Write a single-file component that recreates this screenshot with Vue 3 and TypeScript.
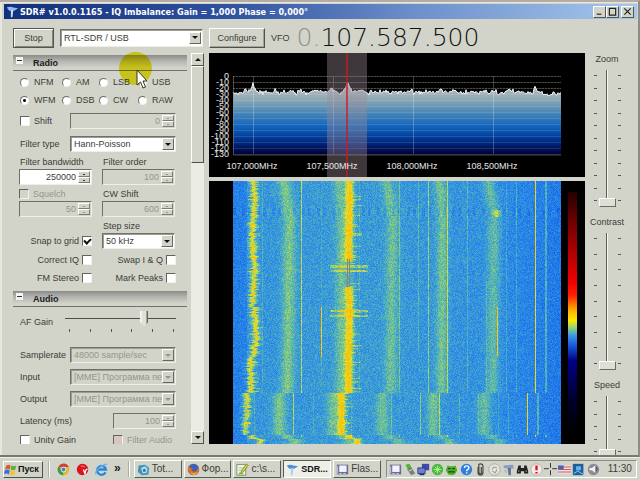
<script setup lang="ts">
import { onMounted, ref } from 'vue'

interface Shape { d: string; fill?: string; stroke?: string; w?: number }

function makeRandom(seed: number) {
  let s = seed
  return () => {
    s = (s * 1664525 + 1013904223) >>> 0
    return s / 4294967296
  }
}

const mode = ref('WFM')
const modes = ['NFM', 'AM', 'LSB', 'USB', 'WFM', 'DSB', 'CW', 'RAW']
const device = ref('RTL-SDR / USB')
const shift = ref(false)
const squelch = ref(false)
const snap = ref(true)
const correctIq = ref(false)
const swapIq = ref(false)
const fmStereo = ref(false)
const markPeaks = ref(false)
const unityGain = ref(false)
const filterAudio = ref(false)
const afGain = ref(73)
const sliders = ref([
  { name: 'Zoom', value: 0, ticks: 11 },
  { name: 'Contrast', value: 0, ticks: 9 },
  { name: 'Speed', value: 0, ticks: 5 },
])

/* Spectrum trace */
const rnd = makeRandom(77)
const trace: string[] = []
let drift = 0
for (let x = 24; x <= 352; x++) {
  drift = drift * 0.6 + (rnd() - 0.5) * 3.4
  let y = 38.6 + drift + (rnd() - 0.5) * 2.8
  y -= 9 * Math.exp(-Math.abs(x - 44) / 1.8)
  y -= 11 * Math.exp(-Math.abs(x - 138.5) / 2.4)
  y -= 5 * Math.exp(-Math.abs(x - 326) / 0.9)
  if (x < 30) y += 2
  if (x > 334) y += 1.6
  trace.push(`${x},${y.toFixed(1)}`)
}
const line = trace.join(' ')
const area = `24,101 ${line} 352,101`
const levels = Array.from({ length: 14 }, (_, i) => ({ y: 23 + i * 6, text: String(-10 * i) }))
const freqs = [
  { x: 44, text: '107,000MHz' },
  { x: 124, text: '107,500MHz' },
  { x: 204, text: '108,000MHz' },
  { x: 284, text: '108,500MHz' },
]

/* Waterfall */
const fall = ref<HTMLCanvasElement | null>(null)
const stops: [number, number[]][] = [
  [0, [16, 78, 205]],
  [0.25, [30, 118, 236]],
  [0.45, [56, 154, 220]],
  [0.6, [92, 184, 172]],
  [0.76, [150, 208, 112]],
  [0.92, [232, 224, 44]],
  [1.1, [255, 190, 0]],
]
function colour(v: number) {
  const t = Math.max(0, Math.min(1.1, v))
  for (let i = 1; i < stops.length; i++) {
    const [b, cb] = stops[i]
    const [a, ca] = stops[i - 1]
    if (t <= b) return ca.map((c, k) => c + ((cb[k] - c) * (t - a)) / (b - a))
  }
  return stops[stops.length - 1][1]
}
interface Carrier { x: number; gain: number; from?: number; to?: number }
const carriers: Carrier[] = [
  { x: 29, gain: 0.12 }, { x: 68, gain: 0.38 }, { x: 88, gain: 0.08 }, { x: 88, gain: 0.54, from: 126, to: 175 },
  { x: 126, gain: 0.1 }, { x: 166, gain: 0.2 }, { x: 185, gain: 0.16, from: 0, to: 172 }, { x: 195, gain: 0.3 },
  { x: 214, gain: 0.34 }, { x: 234, gain: 0.16 }, { x: 253, gain: 0.12, from: 100 },
  { x: 264, gain: 0.54, from: 126, to: 174 }, { x: 273, gain: 0.12 }, { x: 283, gain: 0.16 },
  { x: 302, gain: 0.66 }, { x: 312, gain: 0.26 }, { x: 313, gain: 0.26 },
]
onMounted(() => {
  const ctx = fall.value?.getContext('2d')
  if (!ctx) return
  const w = 328
  const h = 263
  const img = ctx.createImageData(w, h)
  const r = makeRandom(2024)
  const gauss = (d: number, s: number) => Math.exp(-(d * d) / (2 * s * s))
  for (let y = 0; y < h; y++) {
    const off = y < 212 ? 0 : y < 254 ? -8 : y < 258 ? 0 : 8
    const bend = y < 34 ? -6 * (1 - y / 34) : -Math.max(0, (y - 40) / 90) % 3
    const wander = Math.sin(y / 11) + (y > 125 && y < 165 ? 2 : 0) - (y > 175 && y < 212 ? 2 : 0)
    const j1 = (r() - 0.5) * 3
    const w1 = 1.4 + r() * 1.8
    const w2 = 2.4 + r() * 1
    const dash = r() > 0.78 ? 5 + r() * 7 : 0
    const burst = (y > 83 && y < 87) || (y > 88 && y < 91) || y === 129 || y === 130 || y === 134 || y === 135
    for (let x = 0; x < w; x++) {
      const u = x - off
      let v = 0.38 + 0.07 * gauss(x - 120, 90) - (x > 255 ? (x - 255) * 0.0016 : 0) - (x < 14 ? 0.1 : 0)
      v += (r() - 0.5) * 0.24
      if (y > 26 && y < 35) v += (Math.floor(x / 3) * 7) % 5 < 2 ? -0.07 : 0.03
      v += (0.42 + r() * 0.16) * gauss(u - 20 - wander - j1, w1)
      v += 0.26 * gauss(u - 56 - bend, 4.6)
      v += 0.2 * gauss(u - 108 - bend / 2, 4)
      v += (y > 80 && y < 106 ? 0.1 : 0.52 + r() * 0.18) * gauss(u - 115.5 - Math.sin(y / 17) / 2, w2)
      v += 0.2 * gauss(u - 159 - bend, 4.5)
      v += 0.24 * gauss(u - 209 - bend / 2, 4.2)
      v += 0.22 * gauss(u - 261 - bend, 4.6)
      if (y > 28 && y < 36) v += 0.3 * gauss(u - 264, 2)
      if (burst && u > 96 && u < 135) v += 0.32 * r() + 0.1
      if (dash && u > 115 && u < 117 + dash) v += 0.22
      if (dash && u > 20 - dash / 2 && u < 21 + dash / 2) v += 0.2
      if (y < 256) {
        for (const c of carriers) {
          if (u === c.x && y >= (c.from ?? 0) && y <= (c.to ?? h)) v += c.gain
        }
      }
      let rgb = colour(v)
      if (y > 77 && y < 106 && (u === 114 || u === 116)) rgb = [128, 134, 128]
      const p = (y * w + x) * 4
      img.data[p] = rgb[0]
      img.data[p + 1] = rgb[1]
      img.data[p + 2] = rgb[2]
      img.data[p + 3] = 255
    }
  }
  ctx.putImageData(img, 0, 0)
})

/* Icons share a 16 x 16 grid */
const disc = 'M8 1a7 7 0 1 0 .01 0z'
const icons: Record<string, Shape[]> = {
  flag: [
    { d: 'M3 3q3-2 5 0L7 8Q4 6 1 8z', fill: '#e2562a' },
    { d: 'M9 3q3 2 6 0l-1 5q-3 2-6 0z', fill: '#5fae3a' },
    { d: 'M1 9q3-2 6 0l-1 5q-3-2-6 0z', fill: '#3c6ed8' },
    { d: 'M8 9q3 2 6 0l-1 5q-3 2-6 0z', fill: '#f4c430' },
  ],
  chrome: [
    { d: disc, fill: '#e0b92c' },
    { d: 'M8 8L2 4a7 7 0 0 1 12.6 1H8z', fill: '#d9412f' },
    { d: 'M2 4l4 5 2 6A7 7 0 0 1 2 4z', fill: '#3c9a46' },
    { d: 'M8 4.500a3.500 3.500 0 1 0 .01 0z', fill: '#f4f4f0' },
    { d: 'M8 5.500a2.500 2.500 0 1 0 .01 0z', fill: '#3f7fd6' },
  ],
  red: [
    { d: disc, fill: '#d81422' },
    { d: 'M9 8l2 5 1-4 2-2', stroke: '#fff', w: 1.6 },
    { d: 'M6 4q3-1 5 1', stroke: '#ff8a8a', w: 1.2 },
  ],
  ie: [
    { d: 'M13 11.500A5.500 5.500 0 1 1 13.500 8H4', stroke: '#2b86dc', w: 2.8 },
    { d: 'M1 14Q0 9 7 4.500T15 2', stroke: '#63b4f2', w: 1.5 },
  ],
  total: [
    { d: 'M2 3l8-1 5 4-1 8-8 1-5-4z', fill: '#3f94bc' },
    { d: 'M5 6l5-2 3 3-1 5-5 1z', fill: '#b4dcec' },
    { d: 'M7 8l3-1 1 3-3 1z', fill: '#2b6f92' },
  ],
  fox: [
    { d: disc, fill: '#3b62b4' },
    { d: 'M2 3q-2 6 1 9 5 5 10 1 3-4 1-10 0 5-3 7-4 2-6-2l3-1-4-1q-1-3-2-3z', fill: '#e8701a' },
    { d: 'M4 11q4 4 9-1-2 5-5 4.500-3 0-4-3.500z', fill: '#f6b634' },
  ],
  note: [
    { d: 'M1 2h11v13H1z', fill: '#f4f6ea', stroke: '#6d8060' },
    { d: 'M3 6h6M3 9h5', stroke: '#9ab87a' },
    { d: 'M7 9l6-8 2 2-6 8-3 1z', fill: '#e8cb34', stroke: '#4c7a32', w: 0.8 },
    { d: 'M3 13q3-3 6-1v2H3z', fill: '#88bf38' },
  ],
  sdr: [
    { d: 'M1 3q4-2 8 0l6 1-5 3H4z', fill: '#4b8fd8' },
    { d: 'M6 6h3l-1 9H6z', fill: '#a9cdf0' },
  ],
  movie: [
    { d: 'M1 2h14v12H1z', fill: '#6b6d9c' },
    { d: 'M4 3h9v8H4z', fill: '#f2f4fc' },
    { d: 'M2 4v9', stroke: '#dde', w: 1 },
    { d: 'M4 13h3M9 13h3', stroke: '#dde', w: 1 },
  ],
  usb: [
    { d: 'M3 2l5-1 3 6-4 3z', fill: '#4ab63c' },
    { d: 'M5 8l5-3 5 8-5 2z', fill: '#7d8078' },
    { d: 'M7 10l4-2', stroke: '#ddd', w: 1.2 },
  ],
  net: [
    { d: 'M6 1h9v8H6z', fill: '#3d4aa8' },
    { d: 'M1 6h9v7H1z', fill: '#6d82d0', stroke: '#28306e' },
    { d: 'M3 14h6', stroke: '#28306e', w: 2 },
  ],
  green: [
    { d: disc, fill: '#48b93c' },
    { d: 'M8 3v10M3 8h10M4.500 4.500l7 7M11.500 4.500l-7 7', stroke: '#b8eca8', w: 1.1 },
  ],
  frog: [
    { d: 'M3 3l3 1h4l3-1 2 6-3 5-4 1-4-1-3-5z', fill: '#4cae2c' },
    { d: 'M4 7h3M9 7h3M4 11h8', stroke: '#17450c', w: 1.5 },
  ],
  help: [
    { d: disc, fill: '#2f7fe0' },
    { d: 'M5.500 6q0-2.500 2.700-2.500T11 6q0 1.500-2.700 3v1M8.200 11.500v1.500', stroke: '#fff', w: 1.7 },
  ],
  clip: [{ d: 'M5 5v7q0 3 3 3t3-3V4q0-3-3-3T6 4v7q0 2 2 2t1-2V5', stroke: '#4a4c48', w: 1.5 }],
  ring: [
    { d: disc, fill: '#e4e5dd', stroke: '#a0a29a' },
    { d: 'M5 8l2-3 4 1M11 8l-2 4-4-2', stroke: '#9b9d96', w: 1.3 },
  ],
  tower: [
    { d: 'M2 3l12-1v5l-12-1z', fill: '#8a9cc0' },
    { d: 'M7 6h4v9H8z', fill: '#66718f' },
    { d: 'M3 8h3v4H3z', fill: '#b3bccc' },
  ],
  binoculars: [
    { d: 'M3 3h3v3h4V3h3l2 7v3h-5v-3H6v3H1v-3z', fill: '#222' },
    { d: 'M3 10h1M12 10h1', stroke: '#ddd', w: 1.4 },
  ],
  alert: [
    { d: disc, fill: '#f4e8e4', stroke: '#b8a5a0' },
    { d: 'M8 3v6M8 11v2', stroke: '#d2152a', w: 2.8 },
  ],
  cross: [{ d: 'M8 0v6M8 9v6M0 7h6M10 7h6', stroke: '#333', w: 1.2 }],
  usa: [
    { d: 'M0 3h16v10H0z', fill: '#f0e4e4' },
    { d: 'M0 5h16M0 8h16M0 11h16', stroke: '#d4545c', w: 1.3 },
    { d: 'M0 3h7v5H0z', fill: '#4c62b0' },
  ],
  book: [
    { d: 'M1 1h13v14H1z', fill: '#1c5f9c' },
    { d: 'M5 4h6v5H5z', fill: '#69b4e4' },
    { d: 'M2 13l5-3 7 4', stroke: '#8fd0f4', w: 1.2 },
  ],
  sound: [
    { d: disc, fill: '#8b8d92' },
    { d: 'M3 6h3l4-3v9l-4-3H3z', fill: '#f0f0f2' },
    { d: 'M11.500 5q2 2.500 0 5', stroke: '#40424a', w: 1.2 },
  ],
}
const quick = ['chrome', 'red', 'ie']
const tasks = [
  { icon: 'total', text: 'Tot...', active: false },
  { icon: 'fox', text: 'Фор...', active: false },
  { icon: 'note', text: 'c:\\s...', active: false },
  { icon: 'sdr', text: 'SDR...', active: true },
  { icon: 'movie', text: 'Flas...', active: false },
]
const tray = ['movie', 'usb', 'net', 'green', 'frog', 'help', 'clip', 'ring', 'tower', 'binoculars', 'alert', 'cross', 'usa', 'book', 'sound']
</script>

<template>
  <div class="desktop">
    <main class="window">
      <header class="title">
        <svg class="icon" viewBox="0 0 16 16">
          <path d="M1 3q4-2 8 0l6 1-5 3H4z" fill="#8fbcf0" />
          <path d="M6 6h3l-1 9H6z" fill="#c4dcf6" />
        </svg>
        <h1>SDR# v1.0.0.1165 - IQ Imbalance: Gain = 1,000 Phase = 0,000°</h1>
        <button class="cap" aria-label="Minimize"><svg viewBox="0 0 10 10"><path d="M2 8h5" /></svg></button>
        <button class="cap" aria-label="Maximize"><svg viewBox="0 0 10 10"><path d="M1 1.500h8M1.500 1v8h7V1" /></svg></button>
        <button class="cap last" aria-label="Close"><svg viewBox="0 0 10 10"><path d="M1.500 1.500l7 7M8.500 1.500l-7 7" /></svg></button>
      </header>

      <div class="body">
        <aside class="side">
          <div class="bar">
            <button class="push stop">Stop</button>
            <div class="combo grow">
              <select v-model="device" aria-label="Device"><option>RTL-SDR / USB</option></select>
              <i class="drop"></i>
            </div>
          </div>
          <div class="scroller">
            <div class="panel">
              <section>
                <h2><span class="fold"></span>Radio</h2>
                <div class="modes">
                  <label v-for="m in modes" :key="m"><input v-model="mode" type="radio" name="mode" :value="m" />{{ m }}</label>
                </div>
                <div class="row tall">
                  <label class="name check"><input v-model="shift" type="checkbox" />Shift</label>
                  <div class="spin off"><input aria-label="Shift value" value="0" disabled /><span><button disabled aria-label="Up"></button><button disabled aria-label="Down"></button></span></div>
                </div>
                <div class="row">
                  <label class="name" for="ftype">Filter type</label>
                  <div class="combo"><select id="ftype"><option>Hann-Poisson</option></select><i class="drop"></i></div>
                </div>
                <div class="pair">
                  <label for="fbw">Filter bandwidth</label>
                  <label for="ford">Filter order</label>
                  <div class="spin"><input id="fbw" value="250000" /><span><button aria-label="Up"></button><button aria-label="Down"></button></span></div>
                  <div class="spin off"><input id="ford" value="100" disabled /><span><button disabled aria-label="Up"></button><button disabled aria-label="Down"></button></span></div>
                </div>
                <div class="pair">
                  <label class="check dim"><input v-model="squelch" type="checkbox" disabled />Squelch</label>
                  <label for="cw">CW Shift</label>
                  <div class="spin off"><input aria-label="Squelch level" value="50" disabled /><span><button disabled aria-label="Up"></button><button disabled aria-label="Down"></button></span></div>
                  <div class="spin off"><input id="cw" value="600" disabled /><span><button disabled aria-label="Up"></button><button disabled aria-label="Down"></button></span></div>
                </div>
                <div class="pair">
                  <span></span>
                  <label for="step">Step size</label>
                  <label class="check end">Snap to grid<input v-model="snap" type="checkbox" /></label>
                  <div class="combo"><select id="step"><option>50 kHz</option></select><i class="drop"></i></div>
                </div>
                <div class="ticks">
                  <label class="check end">Correct IQ<input v-model="correctIq" type="checkbox" /></label>
                  <label class="check end">Swap I &amp; Q<input v-model="swapIq" type="checkbox" /></label>
                  <label class="check end">FM Stereo<input v-model="fmStereo" type="checkbox" /></label>
                  <label class="check end">Mark Peaks<input v-model="markPeaks" type="checkbox" /></label>
                </div>
              </section>
              <section>
                <h2><span class="fold"></span>Audio</h2>
                <div class="gain">
                  <label for="af">AF Gain</label>
                  <div class="hslide">
                    <input id="af" v-model="afGain" type="range" min="0" max="100" />
                    <div class="marks"><i v-for="n in 6" :key="n"></i></div>
                  </div>
                </div>
                <div class="row">
                  <label class="name" for="rate">Samplerate</label>
                  <div class="combo off"><select id="rate" disabled><option>48000 sample/sec</option></select><i class="drop"></i></div>
                </div>
                <div class="row">
                  <label class="name" for="inp">Input</label>
                  <div class="combo off"><select id="inp" disabled><option>[MME] Программа переназначения</option></select><i class="drop"></i></div>
                </div>
                <div class="row">
                  <label class="name" for="outp">Output</label>
                  <div class="combo off"><select id="outp" disabled><option>[MME] Программа переназначения</option></select><i class="drop"></i></div>
                </div>
                <div class="row wide">
                  <label class="name" for="lat">Latency (ms)</label>
                  <div class="spin off"><input id="lat" value="100" disabled /><span><button disabled aria-label="Up"></button><button disabled aria-label="Down"></button></span></div>
                </div>
                <div class="row wide low">
                  <label class="name check"><input v-model="unityGain" type="checkbox" />Unity Gain</label>
                  <label class="check dim"><input v-model="filterAudio" class="rosy" type="checkbox" disabled />Filter Audio</label>
                </div>
              </section>
            </div>
            <div class="scrollbar">
              <button class="arrow up" aria-label="Scroll up"></button>
              <div class="thumb"></div>
              <button class="arrow down" aria-label="Scroll down"></button>
            </div>
          </div>
        </aside>

        <section class="view">
          <div class="bar">
            <button class="push config">Configure</button>
            <span class="vfo">VFO</span>
            <output class="freq"><span>0.</span>107.587.500</output>
          </div>
          <svg class="spectrum" viewBox="0 0 376 124">
            <defs>
              <linearGradient id="sky" gradientUnits="userSpaceOnUse" x1="0" y1="34" x2="0" y2="101">
                <stop offset="0" stop-color="#b4bcc0" />
                <stop offset="0.18" stop-color="#8fa8b4" />
                <stop offset="0.4" stop-color="#4484b8" />
                <stop offset="0.6" stop-color="#0f62bc" />
                <stop offset="0.8" stop-color="#00308a" />
                <stop offset="1" stop-color="#000038" />
              </linearGradient>
            </defs>
            <polygon :points="area" fill="url(#sky)" />
            <g stroke="#ffffff" stroke-opacity="0.12">
              <path v-for="l in levels" :key="l.y" :d="`M24 ${l.y + 0.5}H352`" />
              <path v-for="f in freqs" :key="f.x" :d="`M${f.x + 0.5} 23V101`" stroke-opacity="0.24" />
            </g>
            <path d="M24 23.500H352M24 29.500H352M24 35.500H352" stroke="#77736c" stroke-dasharray="2 1" stroke-opacity="0.5" />
            <polyline :points="line" fill="none" stroke="#f2f5f8" />
            <path d="M24.500 23V102H352" fill="none" stroke="#8a8c9c" stroke-opacity="0.5" />
            <rect x="118" y="0" width="40" height="124" fill="#9a8c96" fill-opacity="0.4" />
            <path d="M138 0V124" stroke="#d01820" stroke-width="1.400" />
            <g class="axis">
              <text v-for="l in levels" :key="l.y" x="20" :y="l.y + 3" text-anchor="end">{{ l.text }}</text>
              <text v-for="f in freqs" :key="f.x" :x="f.x - 1" y="116" text-anchor="middle">{{ f.text }}</text>
            </g>
          </svg>
          <div class="fall">
            <canvas ref="fall" width="328" height="263"></canvas>
            <div class="scale"></div>
          </div>
        </section>

        <aside class="tune">
          <div v-for="s in sliders" :key="s.name" class="vgroup">
            <label :for="s.name">{{ s.name }}</label>
            <div class="vslide" :class="{ short: s.ticks === 5 }">
              <div class="vmarks"><i v-for="n in s.ticks" :key="n"></i></div>
              <input :id="s.name" v-model="s.value" type="range" min="0" max="100" />
              <div class="vmarks"><i v-for="n in s.ticks" :key="n"></i></div>
            </div>
          </div>
        </aside>
      </div>
    </main>

    <footer class="taskbar">
      <button class="start">
        <svg class="icon" viewBox="0 0 16 16"><path v-for="(s, i) in icons.flag" :key="i" :d="s.d" :fill="s.fill" /></svg>Пуск
      </button>
      <nav class="quick">
        <button v-for="q in quick" :key="q" :aria-label="q">
          <svg class="icon" viewBox="0 0 16 16"><path v-for="(s, i) in icons[q]" :key="i" :d="s.d" :fill="s.fill ?? 'none'" :stroke="s.stroke" :stroke-width="s.w ?? 1" /></svg>
        </button>
        <b>»</b>
      </nav>
      <div class="tasks">
        <button v-for="t in tasks" :key="t.text" :class="{ active: t.active }">
          <svg class="icon" viewBox="0 0 16 16"><path v-for="(s, i) in icons[t.icon]" :key="i" :d="s.d" :fill="s.fill ?? 'none'" :stroke="s.stroke" :stroke-width="s.w ?? 1" /></svg>{{ t.text }}
        </button>
      </div>
      <div class="tray">
        <svg v-for="(t, k) in tray" :key="k" class="icon" viewBox="0 0 16 16"><path v-for="(s, i) in icons[t]" :key="i" :d="s.d" :fill="s.fill ?? 'none'" :stroke="s.stroke" :stroke-width="s.w ?? 1" /></svg>
        <time>11:30</time>
      </div>
    </footer>

    <div class="halo"></div>
    <svg class="pointer" viewBox="0 0 12 20"><path d="M1 1v15l3.500-3 2.500 6 2.500-1-2.500-6H11z" fill="#fff" stroke="#333" /></svg>
  </div>
</template>

<style>
body {
  margin: 0;
  background: #d3d4c9;
}
</style>

<style scoped>
.desktop {
  --face: #d3d4c9;
  --ink: #3b3c38;
  --dim: #94958c;
  --dark: #6f7068;
  position: relative;
  height: 100vh;
  display: flex;
  flex-direction: column;
  overflow: hidden;
  background: var(--face);
  color: var(--ink);
  font: 9px/12px "Liberation Sans", Arial, sans-serif;
}
* { box-sizing: border-box; }
button, input, select, output { font: inherit; color: inherit; }
button, input, select { margin: 0; padding: 0; border-radius: 0; }
.icon { width: 13px; height: 13px; flex: none; }

.window {
  flex: 1;
  min-height: 0;
  display: flex;
  flex-direction: column;
  border-top: 2px solid #b5ada5;
  border-right: 2px solid #8c8d86;
  border-bottom: 2px solid #77786f;
  padding: 2px 1px 0 4px;
  box-shadow: inset 2px 1px 0 #e6e7de;
}
.title {
  flex: none;
  display: flex;
  align-items: center;
  height: 15px;
  padding: 0 3px 0 2px;
  background: linear-gradient(90deg, #12307c, #2e519f 35%, #6d8fcb 65%, #a4c8ee);
}
.title h1 {
  flex: 1;
  margin: 0 0 0 1px;
  color: #fff;
  font: bold 9px/14px "DejaVu Sans Condensed", "DejaVu Sans", sans-serif;
  white-space: nowrap;
}
.cap {
  width: 13px;
  height: 12px;
  display: grid;
  place-items: center;
  background: var(--face);
  border: 1px solid;
  border-color: #fff #55564f #55564f #fff;
}
.cap.last { margin-left: 2px; }
.cap svg { width: 9px; height: 9px; fill: none; stroke: #222; stroke-width: 1.3; }

.body { flex: 1; min-height: 0; display: flex; }
.side { width: 200px; flex: none; display: flex; flex-direction: column; padding: 0 0 11px 9px; }
.bar { flex: none; height: 34px; display: flex; align-items: center; padding-top: 3px; gap: 6px; }
.push {
  height: 20px;
  background: var(--face);
  border: 1px solid;
  border-color: #fff #505149 #505149 #fff;
  box-shadow: inset -1px -1px 0 #a2a399;
}
.stop { width: 41px; border-color: #55564e; box-shadow: inset 1px 1px 0 #fff, inset -1px -1px 0 #84857c; }
.config { width: 56px; }

.combo { display: grid; height: 16px; min-width: 0; background: #fff; border: 1px solid; border-color: var(--dark) #eeefe6 #eeefe6 var(--dark); box-shadow: inset 1px 1px 0 #9b9c92; }
.combo select {
  grid-area: 1 / 1;
  width: 100%;
  min-width: 0;
  height: 14px;
  padding: 0 13px 0 3px;
  appearance: none;
  border: 0;
  background: transparent;
  opacity: 1;
  outline: 0;
}
.drop {
  grid-area: 1 / 1;
  justify-self: end;
  align-self: center;
  width: 12px;
  height: 12px;
  margin-right: 1px;
  display: grid;
  place-items: center;
  pointer-events: none;
  background: var(--face);
  border: 1px solid;
  border-color: #fff #66675f #66675f #fff;
}
.drop::after { content: ""; border: 3px solid transparent; border-top: 3px solid #111; border-bottom: 0; }
.combo.grow { flex: 1; height: 18px; margin-right: 1px; }
.grow select { height: 16px; }
.off, .combo.off { background: var(--face); color: var(--dim); }
.off .drop::after { border-top-color: var(--dim); }

.spin { display: flex; height: 16px; min-width: 0; padding: 1px; background: #fff; border: 1px solid; border-color: var(--dark) #eeefe6 #eeefe6 var(--dark); }
.spin.off { background: var(--face); }
.spin input { flex: 1; width: 20px; min-width: 0; border: 0; background: transparent; text-align: right; padding-right: 2px; outline: 0; }
.spin span { width: 12px; display: flex; flex-direction: column; }
.spin button { flex: 1; min-height: 0; display: grid; place-items: center; background: var(--face); border: 1px solid; border-color: #fff #7a7b72 #7a7b72 #fff; }
.spin button::after { content: ""; width: 2px; height: 1px; background: #333; }
.off button::after { background: var(--dim); }

.scroller { flex: 1; min-height: 0; display: flex; gap: 4px; }
.panel { flex: 1; min-width: 0; overflow: hidden; padding-top: 2px; }
h2 {
  display: flex;
  align-items: center;
  gap: 10px;
  height: 16px;
  margin: 0 0 2px;
  padding-left: 3px;
  font-size: 9px;
  color: #1c1c1c;
  background: linear-gradient(#8b8b88, #b4b4b0 40%, #d2d3ca 85%);
  border-bottom: 1px solid #77706e;
}
.fold { width: 7px; height: 7px; margin-top: -5px; background: linear-gradient(#333, #333) center / 5px 1px no-repeat #f4f4f0; }
.modes { display: grid; grid-template-columns: 42px 37px 39px 1fr; grid-auto-rows: 18px; padding-left: 7px; }
.modes label, .check { display: flex; align-items: center; white-space: nowrap; }
.modes label { gap: 5px; }
input[type="radio"] {
  appearance: none;
  width: 9px;
  height: 9px;
  border-radius: 50%;
  border: 1px solid;
  border-color: #6c6d66 #f2f3ea #f2f3ea #6c6d66;
  background: #fff;
}
input[type="radio"]:checked { background: radial-gradient(circle, #111 0 1px, #fff 2px); }
input[type="checkbox"] {
  appearance: none;
  flex: none;
  width: 10px;
  height: 10px;
  display: grid;
  border: 1px solid;
  border-color: #63645c #f2f3ea #f2f3ea #63645c;
  background: #fff;
}
input[type="checkbox"]:disabled { background: var(--face); }
input.rosy:disabled { background: #d9c6c2; }
input[type="checkbox"]:checked::after {
  content: "";
  width: 5px;
  height: 3px;
  margin: 1px;
  border: solid #111;
  border-width: 0 0 2px 2px;
  rotate: -45deg;
}
.check { gap: 4px; }
.check.end { justify-content: flex-end; gap: 3px; }
.dim { color: var(--dim); }
.row { display: grid; grid-template-columns: 50px 106px; align-items: center; height: 22px; padding-left: 7px; }
.row.tall { height: 24px; }
.row.wide { grid-template-columns: 93px 63px; }
.row.low { height: 16px; }
.name { white-space: nowrap; }
.pair { display: grid; grid-template: 14px 16px / 73px 73px; column-gap: 10px; height: 32px; padding-left: 6px; align-items: center; }
.pair > label:not(.check) { padding-left: 1px; }
.ticks { display: grid; grid-template-columns: 73px 74px; grid-auto-rows: 18px; column-gap: 10px; padding-left: 6px; margin-bottom: 4px; }
.gain { display: flex; height: 35px; padding: 0 11px 0 7px; }
.gain label { width: 45px; padding-top: 7px; }
.hslide { flex: 1; }
.hslide input { appearance: none; display: block; width: 100%; height: 19px; background: linear-gradient(#4e4f48, #4e4f48) center 9px / 100% 1px no-repeat; }
.hslide input::-webkit-slider-thumb {
  appearance: none;
  width: 8px;
  height: 16px;
  background: linear-gradient(90deg, #fff 0 1px, #e0e1d8 2px 6px, #65665e 7px);
  clip-path: polygon(0 0, 100% 0, 100% 72%, 50% 100%, 0 72%);
}
.marks { display: flex; justify-content: space-between; padding: 1px 2px 0 4px; }
.marks i { width: 1px; height: 3px; background: #55564f; }

.scrollbar { width: 13px; flex: none; display: flex; flex-direction: column; background: #ebece4; }
.arrow { height: 13px; flex: none; display: grid; place-items: center; background: var(--face); border: 1px solid; border-color: #fff #505149 #505149 #fff; }
.arrow::after { content: ""; border: 3px solid transparent; }
.up::after { border-bottom-color: #111; border-top: 0; }
.down::after { border-top-color: #111; border-bottom: 0; }
.thumb { height: 97px; margin-bottom: auto; background: var(--face); border: 1px solid; border-color: #fff #505149 #505149 #fff; }

.view { flex: 1; min-width: 0; display: flex; flex-direction: column; padding: 0 0 11px 5px; }
.vfo { margin-right: 1px; }
.freq { font: 200 25px/30px "DejaVu Sans Light", "DejaVu Sans", sans-serif; color: #111; white-space: nowrap; }
.freq span { color: #8f9088; }
.spectrum { flex: none; display: block; width: 100%; height: auto; margin-bottom: 4px; background: #000; }
.axis { fill: #e6e6e6; font: 9px "Liberation Sans", Arial, sans-serif; }
.fall { flex: 1; min-height: 0; display: flex; gap: 7px; padding: 0 8px 0 24px; background: #000; }
.fall canvas { flex: 1; min-width: 0; width: 0; height: 100%; }
.scale {
  width: 9px;
  margin-top: 11px;
  background: linear-gradient(#280000, #700000 12%, #f00000 36%, #ff2000 41%, #ffb000 47%, #ffe800 51%, #90d080 54%, #3a98e0 57%, #1858d8 61%, #000088 67%, #000030 82%, #000 96%);
}

.tune { width: 44px; flex: none; margin-right: 8px; padding-top: 33px; overflow: hidden; }
.vgroup { height: 163px; display: flex; flex-direction: column; align-items: center; gap: 4px; }
.vgroup label { line-height: 14px; }
.vslide { display: flex; height: 137px; }
.vslide.short { height: 62px; }
.vmarks { display: flex; flex-direction: column; justify-content: space-between; padding: 5px 0 6px; }
.vmarks i { width: 3px; height: 1px; background: #55564f; }
.vslide input {
  appearance: none;
  writing-mode: vertical-lr;
  direction: rtl;
  width: 21px;
  height: 100%;
  background: linear-gradient(90deg, #5c5d56 1px, #f6f7f0 1px) center / 2px 100% no-repeat;
}
.vslide input::-webkit-slider-thumb {
  appearance: none;
  width: 17px;
  height: 9px;
  background: #dedfd6;
  border: 1px solid;
  border-color: #fff #6a6b63 #6a6b63 #fff;
}

.taskbar { flex: none; height: 23px; display: flex; align-items: center; padding: 0 3px; font-size: 10px; border-top: 1px solid #eeefe6; }
.taskbar button { display: flex; align-items: center; }
.start { width: 40px; height: 17px; gap: 1px; background: var(--face); border: 1px solid; border-color: #fff #505149 #505149 #fff; color: #111; font-size: 9px; font-weight: bold; }
.quick { display: flex; align-items: center; gap: 6px; margin-left: 5px; padding: 0 7px; border-left: 2px groove #fff; border-right: 2px groove #fff; height: 16px; }
.quick button { background: none; border: 0; }
.quick b { font-size: 12px; color: #222; margin-top: -3px; }
.tasks { display: flex; flex: 1; gap: 2px; margin: 0 5px 0 4px; }
.tasks button { flex: 0 1 48px; min-width: 0; height: 18px; gap: 2px; padding: 0 2px; overflow: hidden; white-space: nowrap; background: var(--face); border: 1px solid; border-color: #fff #5a5b53 #5a5b53 #fff; }
.tasks button.active { background: #eeefe8; border-color: #5a5b53 #fff #fff #5a5b53; color: #111; font-size: 9px; font-weight: bold; }
.tray { flex: none; width: 251px; height: 18px; display: flex; align-items: center; justify-content: space-between; padding: 0 4px 0 2px; border: 1px solid; border-color: #8d8e85 #fff #fff #8d8e85; }
.tray time { margin-left: 7px; }

.halo { position: absolute; left: 119px; top: 52px; width: 33px; height: 33px; border-radius: 50%; background: #f2ea24; mix-blend-mode: multiply; pointer-events: none; }
.pointer { position: absolute; left: 136px; top: 69px; width: 12px; height: 20px; pointer-events: none; }
</style>
